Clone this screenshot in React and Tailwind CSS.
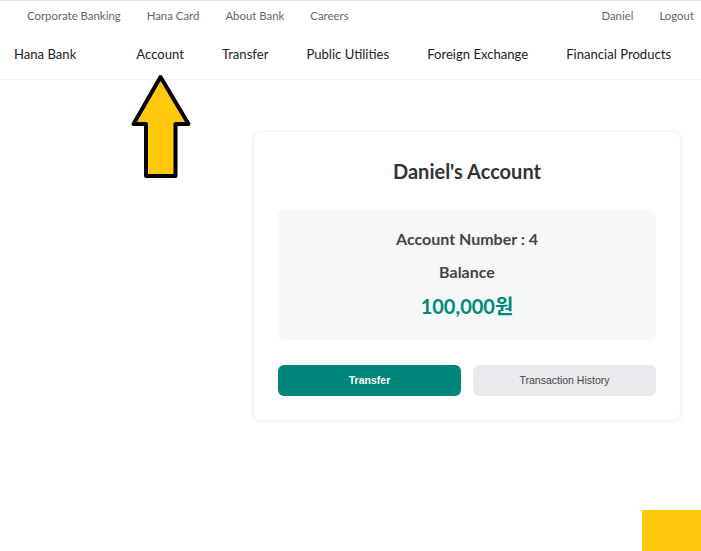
export default function App() {
  const kr = { fontFamily: 'Lato, "Noto Sans CJK KR", sans-serif' };
  return (
    <div className="relative w-[701px] h-[551px] overflow-hidden bg-white whitespace-nowrap" style={kr}>
      {/* top utility bar */}
      <div className="h-[30px] border-t border-[#e5e5e5] flex items-center justify-between pl-[27px] pr-[7px] text-[11.4px] text-[#666]">
        <div className="flex gap-[26px]">
          <span>Corporate Banking</span>
          <span>Hana Card</span>
          <span>About Bank</span>
          <span>Careers</span>
        </div>
        <div className="flex gap-[26px]">
          <span>Daniel</span>
          <span>Logout</span>
        </div>
      </div>
      {/* main nav */}
      <div className="h-[50px] border-b border-[#eee] flex items-center pl-[14px] text-[13.1px] text-[#222]">
        <span className="mr-[60px]">Hana Bank</span>
        <div className="flex gap-[38px]">
          <span>Account</span>
          <span>Transfer</span>
          <span>Public Utilities</span>
          <span>Foreign Exchange</span>
          <span>Financial Products</span>
        </div>
      </div>
      {/* card */}
      <div className="ml-[253px] mt-[51px] w-[428px] bg-white border border-[#f3f3f3] rounded-[8px] shadow-[0_1px_4px_rgba(0,0,0,0.06)] p-6">
        <h2 className="h-[32px] leading-[30px] text-center text-[20px] font-bold text-[#333] mb-[22px]">Daniel's Account</h2>
        <div className="bg-[#f7f8fa] rounded-[6px] p-5 flex flex-col items-center">
          <div className="h-[20px] leading-[18px] text-[16px] font-bold text-[#444]">Account Number : 4</div>
          <div className="mt-[13px] h-[20px] leading-[18px] text-[16px] font-bold text-[#444]">Balance</div>
          <div className="mt-[13px] h-[24px] leading-[21px] text-[20px] font-bold text-[#00897b]">100,000원</div>
        </div>
        <div className="mt-[25px] flex gap-3" style={{ fontFamily: '"Liberation Sans", Arial, sans-serif' }}>
          <button className="flex-1 h-[31px] rounded-[6px] bg-[#00857a] text-white text-[10.5px] font-bold">Transfer</button>
          <button className="flex-1 h-[31px] rounded-[6px] bg-[#e8eaed] text-[#444] text-[10.5px]">Transaction History</button>
        </div>
      </div>
      {/* arrow annotation */}
      <svg className="absolute left-[128px] top-[72px]" width="66" height="110" viewBox="0 0 66 110">
        <polygon points="32.5,5 5.5,52 18,52 18,104 47.5,104 47.5,52 60.5,52" fill="#ffc90e" stroke="#000" strokeWidth="4" strokeLinejoin="round" />
      </svg>
      {/* yellow block */}
      <div className="absolute left-[642px] top-[510px] w-[59px] h-[41px] bg-[#ffc90e]" />
    </div>
  );
}
